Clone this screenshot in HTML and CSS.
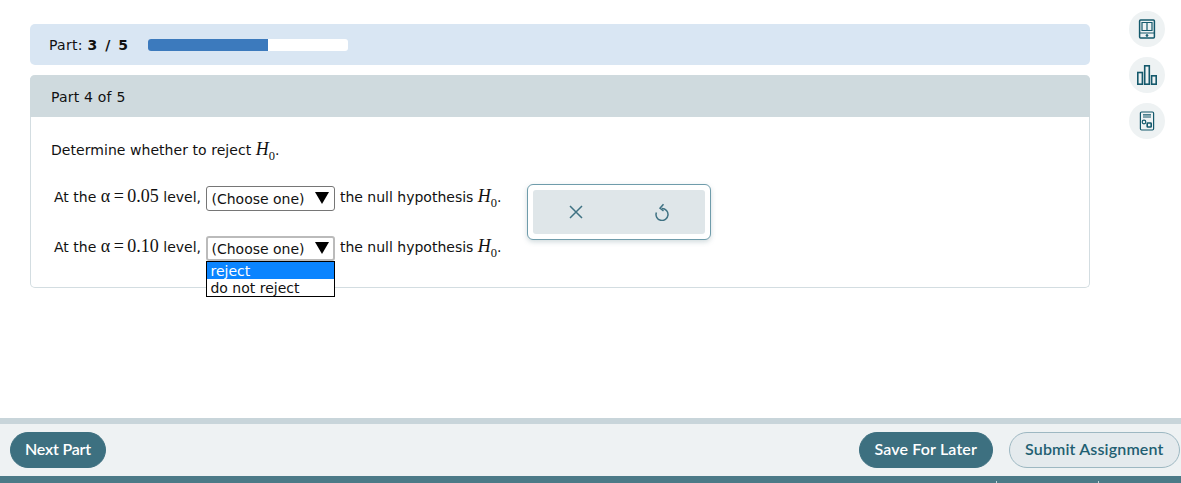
FILE: index.html
```html
<!DOCTYPE html>
<html lang="en">
<head>
    <meta charset="UTF-8">
    <meta name="viewport" content="width=device-width, initial-scale=1.0">
    <title>Assignment</title>
    <link rel="stylesheet" href="styles.css">
</head>
<body>
    <div class="content">
        <div class="main">
            <div class="progress-bar">
                <span class="progress-label">Part: <b>3 / 5</b></span>
                <div class="progress-track"><div class="progress-fill"></div></div>
            </div>

            <div class="part-card">
                <div class="part-header">Part 4 of 5</div>
                <div class="part-body">
                    <p class="prompt">Determine whether to reject <span class="math"><i>H</i><sub>0</sub></span>.</p>

                    <div class="answer-area">
                        <div class="question-lines">
                            <div class="line">
                                At the <span class="math">&alpha;<span class="op">=</span>0.05</span> level,
                                <span class="select"><span>(Choose one)</span><span class="arrow"></span></span>
                                the null hypothesis <span class="math"><i>H</i><sub>0</sub></span>.
                            </div>
                            <div class="line">
                                At the <span class="math">&alpha;<span class="op">=</span>0.10</span> level,
                                <span class="select select-open">
                                    <span>(Choose one)</span><span class="arrow"></span>
                                    <ul class="options">
                                        <li class="selected">reject</li>
                                        <li>do not reject</li>
                                    </ul>
                                </span>
                                the null hypothesis <span class="math"><i>H</i><sub>0</sub></span>.
                            </div>
                        </div>

                        <div class="tool-popup">
                            <div class="tool-inner">
                                <svg width="16" height="16" viewBox="0 0 16 16" fill="none" stroke="#3f7283" stroke-width="1.5"><path d="M2 2l12 12M14 2L2 14"/></svg>
                                <svg width="16" height="18" viewBox="0 0 16 18" fill="none" stroke="#3f7283" stroke-width="1.5"><path d="M8 5.5a6 6 0 1 1-5.6 3.9"/><path d="M9.5 1.2L6 5.2l3.5 2.8"/></svg>
                            </div>
                        </div>
                    </div>
                </div>
            </div>
        </div>

        <div class="rail">
            <div class="rail-icon">
                <svg width="20" height="20" viewBox="0 0 20 20" fill="none" stroke="#14596c" stroke-width="1.5">
                    <rect x="2.6" y="1" width="14.8" height="18" rx="1"/>
                    <path d="M2.6 14h14.8M5 3.5h10v8H5zM10 4v7.5" stroke-width="1.2"/>
                    <circle cx="10" cy="16.5" r=".9" fill="#14596c" stroke-width="1"/>
                </svg>
            </div>
            <div class="rail-icon">
                <svg width="20" height="20" viewBox="0 0 20 20" fill="none" stroke="#14596c" stroke-width="1.6">
                    <rect x=".8" y="7.5" width="4.6" height="11.7"/>
                    <rect x="7.7" y=".8" width="4.6" height="18.4"/>
                    <rect x="14.6" y="10.8" width="4.6" height="8.4"/>
                </svg>
            </div>
            <div class="rail-icon">
                <svg width="20" height="20" viewBox="0 0 20 20" fill="none" stroke="#14596c" stroke-width="1.2">
                    <rect x="3.4" y="1" width="13.2" height="18" rx="1.2"/>
                    <path d="M6 3.8h8M6 6h8"/>
                    <circle cx="7" cy="11" r="1.8"/>
                    <rect x="10.2" y="12" width="4" height="4" rx=".6" stroke-width="1.6"/>
                </svg>
            </div>
        </div>
    </div>

    <div class="footer">
        <div class="footer-actions">
            <button class="btn btn-next">Next Part</button>
            <div class="footer-right">
                <button class="btn btn-save">Save For Later</button>
                <button class="btn btn-outline">Submit Assignment</button>
            </div>
        </div>
        <div class="footer-strip"></div>
    </div>
</body>
</html>
```

FILE: styles.css
```css
html, body {
    height: 100%;
}

body {
    margin: 0;
    font-family: "DejaVu Sans", Verdana, sans-serif;
    font-size: 14px;
    color: #111;
    background-color: white;
    display: flex;
    flex-direction: column;
    overflow: hidden;
}

.content {
    flex: 1;
    display: flex;
    padding: 11px 0 0 30px;
}

.main {
    width: 1060px;
    padding-top: 13px;
}

.progress-bar {
    height: 41px;
    display: flex;
    align-items: center;
    gap: 19px;
    padding-left: 19px;
    background-color: #d9e6f3;
    border-radius: 5px;
}

.progress-label {
    letter-spacing: 0.3px;
}

.progress-bar b {
    letter-spacing: 1.5px;
}

.progress-track {
    width: 200px;
    height: 12px;
    background-color: white;
    border-radius: 3px;
    overflow: hidden;
}

.progress-fill {
    width: 60%;
    height: 100%;
    background-color: #3c7abd;
}

.part-card {
    margin-top: 10px;
    border: 1px solid #d3dde1;
    border-top: none;
    border-radius: 5px;
}

.part-header {
    height: 42px;
    line-height: 44px;
    margin: 0 -1px;
    padding-left: 21px;
    background-color: #cfdade;
    border-radius: 5px 5px 0 0;
    letter-spacing: 0.2px;
}

.part-body {
    height: 170px;
    padding: 0 20px;
}

.prompt {
    margin: 0;
    padding-top: 20px;
    height: 33px;
    line-height: 24px;
    letter-spacing: 0.05px;
}

.math {
    font-family: "Liberation Serif", "Times New Roman", serif;
    font-size: 18px;
}

.op {
    margin: 0 3.5px;
}

.math sub {
    font-size: 12.5px;
    line-height: 0;
}

.answer-area {
    display: flex;
    padding-left: 3px;
    padding-top: 14px;
}

.question-lines {
    width: 473px;
}

.line {
    height: 50px;
    line-height: 24px;
    white-space: nowrap;
}

.select {
    position: relative;
    display: inline-flex;
    align-items: center;
    justify-content: space-between;
    box-sizing: border-box;
    width: 129px;
    height: 25px;
    padding: 2px 5px 0 4px;
    margin: 0 0 0 1px;
    vertical-align: middle;
    border: 1px solid #767676;
    border-radius: 3px;
    background-color: white;
}

.select-open {
    border: 2px solid #bbb;
    padding-left: 3px;
    padding-right: 4px;
}

.arrow {
    width: 0;
    height: 0;
    border-left: 7px solid transparent;
    border-right: 7px solid transparent;
    border-top: 12px solid black;
    margin-top: -2px;
}

/* dropdown list sits over the card */
.options {
    position: absolute;
    top: 23px;
    left: -2px;
    width: 129px;
    box-sizing: border-box;
    margin: 0;
    padding: 0;
    list-style-type: none;
    border: 1px solid black;
    background-color: white;
    line-height: 19px;
    z-index: 2;
}

.options li {
    padding-left: 3px;
    height: 17px;
}

.options .selected {
    background-color: #0a84ff;
    color: white;
}

.tool-popup {
    width: 184px;
    height: 56px;
    box-sizing: border-box;
    padding: 5px;
    border: 1px solid #6f9cab;
    border-radius: 6px;
    background-color: white;
    box-shadow: 0 2px 5px rgba(70, 110, 125, 0.25);
}

.tool-inner {
    height: 44px;
    display: flex;
    align-items: center;
    justify-content: space-around;
    background-color: #dfe6e9;
    border-radius: 3px;
}

.rail {
    flex: 1;
    display: flex;
    flex-direction: column;
    align-items: center;
    gap: 10px;
    padding-left: 39px;
    padding-right: 16px;
}

.rail-icon {
    width: 36px;
    height: 36px;
    display: flex;
    align-items: center;
    justify-content: center;
    border-radius: 50%;
    background-color: #eef2f3;
}

.footer {
    border-top: 6px solid #c8d5da;
}

.footer-actions {
    height: 52px;
    display: flex;
    align-items: center;
    justify-content: space-between;
    padding: 0 1px 0 10px;
    box-sizing: border-box;
    background-color: #eef2f3;
}

.footer-right {
    display: flex;
    gap: 16px;
}

.btn {
    height: 36px;
    padding: 0 14px 4px;
    border: 1px solid #3d7080;
    border-radius: 18px;
    background-color: #3d7080;
    color: white;
    font-family: Lato, "Open Sans", sans-serif;
    font-size: 16px;
    font-weight: 600;
    letter-spacing: 0.15px;
}

.btn-next {
    letter-spacing: -0.2px;
}

.btn-save {
    padding: 0 14.5px 4px;
}

.btn-outline {
    padding: 0 15.5px 4px;
    background-color: #e4eaed;
    border-color: #9db8c2;
    color: #1f5f72;
}

/* two tiny light ticks along the bottom edge */
.footer-strip {
    height: 7px;
    background-color: #4c7a87;
    background-image: linear-gradient(#c5d6da, #c5d6da), linear-gradient(#c5d6da, #c5d6da);
    background-size: 1px 2px;
    background-position: 996px bottom, 1098px bottom;
    background-repeat: no-repeat;
}
```
